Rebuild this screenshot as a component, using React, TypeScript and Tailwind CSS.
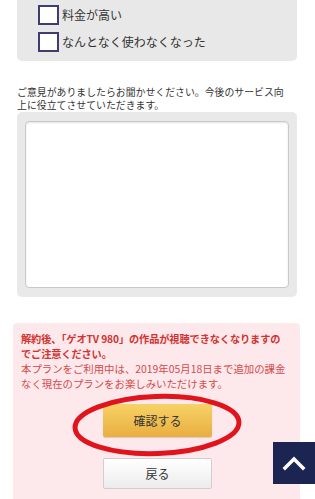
import React from "react";

export default function App() {
  return (
    <div
      className="relative w-[315px] h-[499px] overflow-hidden bg-white text-[#333]"
      style={{ fontFamily: '"Noto Sans CJK JP", "Noto Sans", sans-serif' }}
    >
      {/* top checkbox panel */}
      <div className="mx-[17px] w-[280px] bg-[#e8e8e8] rounded-b-[5px] pt-[5px] pb-[9px] pl-[21px] flex flex-col gap-[7px]">
        <label className="flex items-center gap-[3px] h-[20px]">
          <span className="w-[21px] h-[20px] border-2 border-[#3f3c74] bg-white box-border" />
          <span className="text-[12px] leading-none text-[#333]">料金が高い</span>
        </label>
        <label className="flex items-center gap-[3px] h-[20px]">
          <span className="w-[21px] h-[20px] border-2 border-[#3f3c74] bg-white box-border" />
          <span className="text-[12px] leading-none text-[#333]">なんとなく使わなくなった</span>
        </label>
      </div>

      {/* paragraph */}
      <p className="mt-[25px] px-[17px] text-[9.9px] leading-[12.5px] text-[#333] whitespace-nowrap">
        ご意見がありましたらお聞かせください。今後のサービス向
        <br />
        上に役立てさせていただきます。
      </p>

      {/* textarea */}
      <div className="mt-[1px] mx-[17px] w-[280px] h-[185px] bg-[#e9e9e9] rounded-[5px] px-[8px] pt-[9px] pb-[9px] flex">
        <div className="flex-1 bg-white border border-[#c9c9c9] rounded-[4px] shadow-[inset_0_1px_2px_rgba(0,0,0,0.12)]" />
      </div>

      {/* notice box */}
      <div className="mt-[26px] mx-[13px] w-[287px] h-[200px] bg-[#fde8ec] rounded-t-[4px] pt-[8px] px-[8px]">
        <p className="text-[10.2px] leading-[15px] font-bold text-[#d13330] whitespace-nowrap tracking-[-0.1px]">
          解約後、「ゲオTV 980」の作品が視聴できなくなりますの
          <br />
          でご注意ください。
        </p>
        <p className="mt-[1px] text-[10.4px] leading-[14.5px] text-[#d54a4a] whitespace-nowrap">
          本プランをご利用中は、2019年05月18日まで追加の課金
          <br />
          なく現在のプランをお楽しみいただけます。
        </p>
        <div className="flex flex-col items-center">
          <button className="mt-[13px] ml-[2px] w-[109px] h-[33px] rounded-[2px] bg-gradient-to-b from-[#f7d266] to-[#e9ae3f] shadow-[0_1px_1px_rgba(0,0,0,0.15)] text-[12px] text-[#333] flex items-center justify-center">
            確認する
          </button>
          <button className="mt-[21px] ml-[2px] w-[109px] h-[31px] rounded-[2px] border border-[#cfcfcf] bg-gradient-to-b from-white to-[#ececec] text-[12px] text-[#333] flex items-center justify-center">
            戻る
          </button>
        </div>
      </div>

      {/* red hand-drawn ellipse overlay */}
      <svg
        className="absolute left-[71px] top-[392px] pointer-events-none"
        width="172"
        height="66"
        viewBox="0 0 172 66"
      >
        <ellipse
          cx="86"
          cy="33"
          rx="82"
          ry="28.5"
          fill="none"
          stroke="#e0141c"
          strokeWidth="5"
          transform="rotate(-2 86 33)"
        />
      </svg>

      {/* scroll to top */}
      <div className="absolute left-[273px] top-[442px] w-[42px] h-[42px] bg-[#1c2551] flex items-center justify-center">
        <svg width="24" height="16" viewBox="0 0 24 16">
          <polyline
            points="3,13 12,4 21,13"
            fill="none"
            stroke="white"
            strokeWidth="3.5"
            strokeLinecap="square"
          />
        </svg>
      </div>
    </div>
  );
}
